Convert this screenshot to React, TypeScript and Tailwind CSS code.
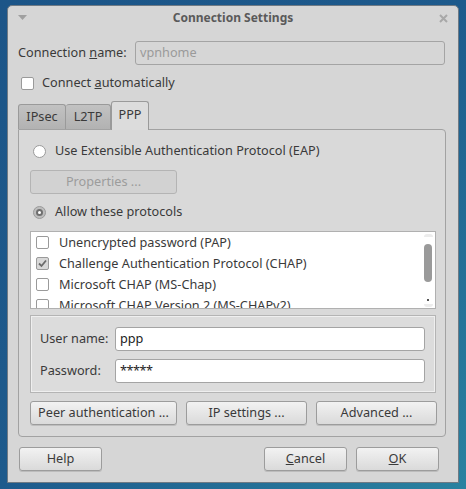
import React from "react";

const font = { fontFamily: '"Noto Sans", "Open Sans", sans-serif' };

function Btn({ children, w, disabled }: { children: React.ReactNode; w: string; disabled?: boolean }) {
  return (
    <div
      className={`${w} h-[24px] shrink-0 flex items-center justify-center rounded-[3px] border text-[12.7px] ${
        disabled
          ? "border-[#b4b4b4] bg-[#d2d2d2] text-[#9c9c9c]"
          : "border-[#9c9c9c] bg-gradient-to-b from-[#f2f2f2] to-[#dadada] text-[#3a3a3a] shadow-[0_1px_0_rgba(0,0,0,0.12)]"
      }`}
    >
      {children}
    </div>
  );
}

function Check({ checked }: { checked?: boolean }) {
  return (
    <div
      className={`w-[13px] h-[13px] shrink-0 rounded-[2px] border border-[#9a9a9a] flex items-center justify-center ${
        checked ? "bg-[#d8d8d8]" : "bg-white"
      }`}
    >
      {checked && (
        <svg width="9" height="9" viewBox="0 0 9 9">
          <path d="M1 4.5 L3.5 7 L8 1.5" stroke="#6a6a6a" strokeWidth="1.8" fill="none" />
        </svg>
      )}
    </div>
  );
}

function Radio({ on }: { on?: boolean }) {
  return (
    <div
      className={`w-[13px] h-[13px] shrink-0 rounded-full border border-[#9a9a9a] flex items-center justify-center ${
        on ? "bg-[#bdbdbd]" : "bg-white"
      }`}
    >
      {on && <div className="w-[7px] h-[7px] rounded-full border-2 border-[#6f6f6f] bg-white" />}
    </div>
  );
}

export default function App() {
  const rows = [
    { t: "Unencrypted password (PAP)", c: false },
    { t: "Challenge Authentication Protocol (CHAP)", c: true },
    { t: "Microsoft CHAP (MS-Chap)", c: false },
    { t: "Microsoft CHAP Version 2 (MS-CHAPv2)", c: false },
  ];
  return (
    <div
      className="w-[466px] h-[489px] overflow-hidden pt-[5px] pl-[7px] bg-gradient-to-br from-[#1c5588] via-[#1d5a8c] to-[#2a82a0]"
      style={font}
    >
      <div className="w-[452px] h-[478px] bg-[#d6d6d6] border border-[#6f7a84] rounded-t-[5px] flex flex-col text-[#3a3a3a] text-[12.7px]">
        {/* title bar */}
        <div className="h-[27px] shrink-0 flex items-center justify-between px-[10px] pb-[3px]">
          <svg width="9" height="6" viewBox="0 0 9 6">
            <path d="M0 0 H9 L4.5 5 Z" fill="#a0a0a0" />
          </svg>
          <div className="font-bold text-[12px] text-[#5a5a5a]">Connection Settings</div>
          <svg width="9" height="9" viewBox="0 0 9 9">
            <path d="M1 1 L8 8 M8 1 L1 8" stroke="#a8a8a8" strokeWidth="2" />
          </svg>
        </div>

        <div className="pl-[10px] pr-[12px] flex flex-col">
          {/* connection name */}
          <div className="mt-[8px] h-[24px] flex items-center">
            <div className="w-[117px] shrink-0">
              Connection <span className="underline">n</span>ame:
            </div>
            <div className="w-[310px] h-[24px] rounded-[3px] border border-[#a4a4a4] bg-[#d6d6d6] text-[#9a9a9a] flex items-center px-[4px]">
              vpnhome
            </div>
          </div>

          {/* connect automatically */}
          <div className="mt-[9px] h-[18px] flex items-center pl-[3px] gap-[8px]">
            <Check />
            <div>
              Connect <span className="underline">a</span>utomatically
            </div>
          </div>

          {/* tabs */}
          <div className="mt-[9px] h-[28px] flex items-end relative z-10">
            <div className="w-[48px] h-[25px] border border-[#9a9a9a] border-b-0 rounded-t-[3px] bg-gradient-to-b from-[#c2c2c2] to-[#b2b2b2] flex items-center justify-center">
              IPsec
            </div>
            <div className="w-[45px] h-[25px] border border-[#9a9a9a] border-b-0 border-l-0 rounded-t-[3px] bg-gradient-to-b from-[#c2c2c2] to-[#b2b2b2] flex items-center justify-center">
              L2TP
            </div>
            <div className="w-[38px] h-[29px] -mb-[1px] border border-[#9a9a9a] border-b-0 rounded-t-[3px] bg-[#dcdcdc] flex items-center justify-center pb-[3px]">
              PPP
            </div>
          </div>

          {/* panel */}
          <div className="w-[428px] h-[308px] border border-[#a2a2a2] rounded-b-[4px] rounded-tr-[4px] bg-[#d9d9d9] pl-[11px] pr-[10px] flex flex-col">
            <div className="mt-[12px] h-[18px] flex items-center pl-[3px] gap-[9px]">
              <Radio />
              <div>Use Extensible Authentication Protocol (EAP)</div>
            </div>
            <div className="mt-[10px]">
              <Btn w="w-[147px]" disabled>
                Properties ...
              </Btn>
            </div>
            <div className="mt-[9px] h-[18px] flex items-center pl-[3px] gap-[9px]">
              <Radio on />
              <div>Allow these protocols</div>
            </div>

            {/* list */}
            <div className="mt-[10px] w-[406px] h-[78px] border border-[#b0b0b0] bg-white flex overflow-hidden">
              <div className="flex-1 flex flex-col overflow-hidden">
                {rows.map((r) => (
                  <div key={r.t} className="h-[21px] shrink-0 flex items-center pl-[5px] gap-[10px]">
                    <Check checked={r.c} />
                    <div className="whitespace-nowrap">{r.t}</div>
                  </div>
                ))}
              </div>
              <div className="w-[14px] shrink-0 relative flex flex-col items-center">
                <div className="mt-[2px] w-[9px] h-[3px] rounded-t-full bg-[#ececec]" />
                <div className="mt-[7px] w-[8px] h-[38px] rounded-full bg-[#9a9a9a]" />
                <div className="mt-[17px] w-[2px] h-[2px] bg-[#555]" />
                <div className="mt-[3px] w-[9px] h-[3px] rounded-b-full bg-[#ececec]" />
              </div>
            </div>

            {/* group box */}
            <div className="mt-[6px] w-[406px] h-[78px] border border-[#b4b4b4] shadow-[inset_0_0_0_1px_#efefef] bg-[#dcdcdc] pl-[9px] pr-[10px] pt-[11px] flex flex-col gap-[8px]">
              <div className="h-[24px] flex items-center">
                <div className="w-[75px] shrink-0">User name:</div>
                <div className="w-[310px] h-[24px] rounded-[3px] border border-[#a4a4a4] bg-white text-[#222] flex items-center px-[4px]">
                  ppp
                </div>
              </div>
              <div className="h-[24px] flex items-center">
                <div className="w-[75px] shrink-0">Password:</div>
                <div className="w-[310px] h-[24px] rounded-[3px] border border-[#a4a4a4] bg-white text-[#222] flex items-center px-[4px] tracking-[-0.5px]">
                  *****
                </div>
              </div>
            </div>

            <div className="mt-[8px] flex gap-[9px]">
              <Btn w="w-[147px]">Peer authentication ...</Btn>
              <Btn w="w-[121px]">IP settings ...</Btn>
              <Btn w="w-[121px]">Advanced ...</Btn>
            </div>
          </div>

          {/* bottom buttons */}
          <div className="mt-[10px] flex pl-[1px]">
            <Btn w="w-[83px]">Help</Btn>
            <div className="flex-1" />
            <div className="flex gap-[9px] mr-[7px]">
              <Btn w="w-[83px]">
                <span>
                  <span className="underline">C</span>ancel
                </span>
              </Btn>
              <Btn w="w-[83px]">
                <span>
                  <span className="underline">O</span>K
                </span>
              </Btn>
            </div>
          </div>
        </div>
      </div>
    </div>
  );
}
